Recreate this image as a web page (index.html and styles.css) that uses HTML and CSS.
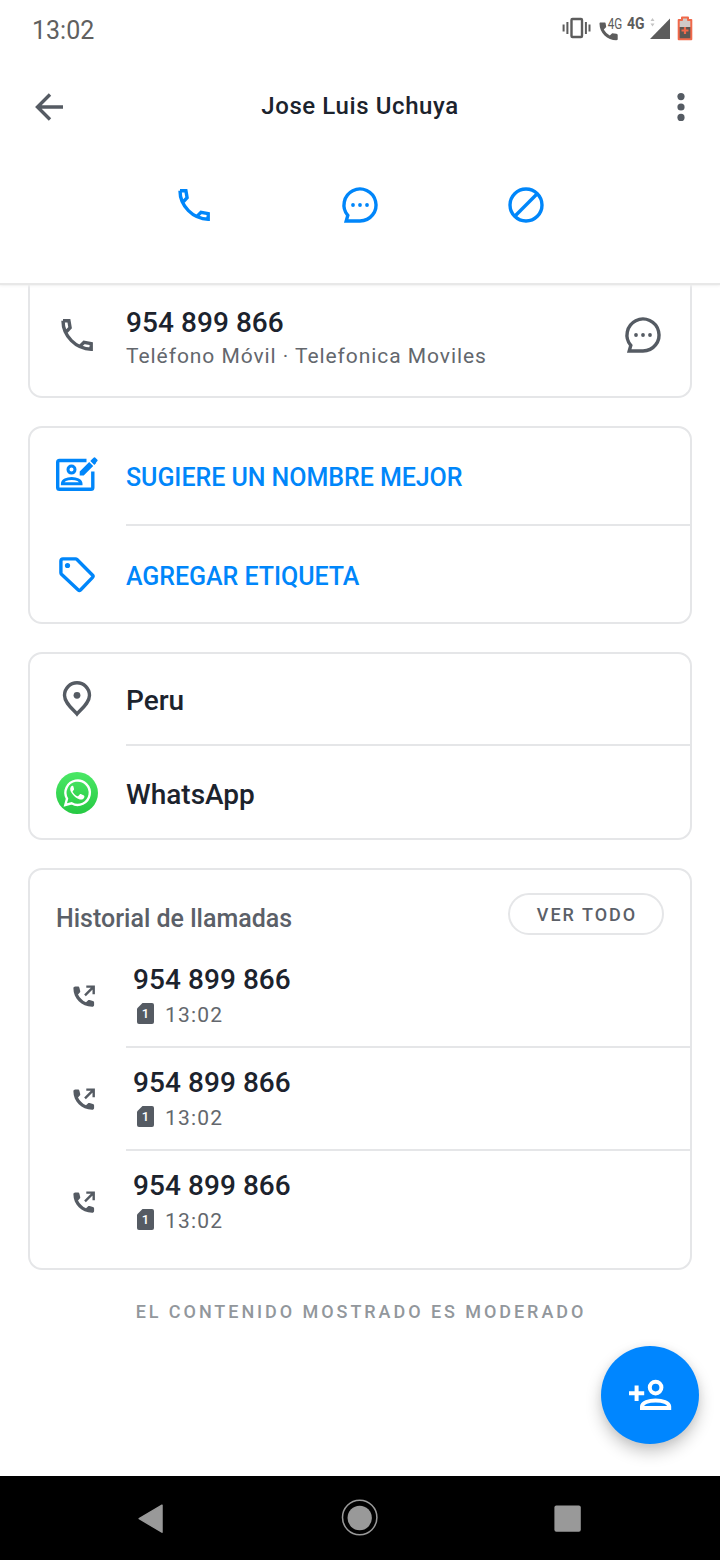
FILE: index.html
```html
<!DOCTYPE html>
<html lang="es">
<head>
<meta charset="utf-8">
<title>Jose Luis Uchuya</title>
<link rel="stylesheet" href="styles.css">
</head>
<body>
<svg class="defs" aria-hidden="true">
  <symbol id="phone" viewBox="0 0 42 42"><path class="line" d="M7 6.8h5.900l1.200 7-4.500 4.700M7 6.800C7 22 20 35 35.200 35.200V29.600L28 28.300l-4.300 4.300"/></symbol>
  <symbol id="chat" viewBox="0 0 42 42"><path class="line" d="M21 37H7.200l1.600-5.650A16 16 0 1 1 21 37z"/><circle cx="14" cy="21" r="1.900"/><circle cx="21" cy="21" r="1.900"/><circle cx="28" cy="21" r="1.900"/></symbol>
  <symbol id="outgoing" viewBox="0 0 28 28"><path d="M3.4 6.3c0-1.100.8-1.800 1.900-1.800h2.600c.8 0 1.300.5 1.500 1.300l.8 3.200c.2.7 0 1.200-.4 1.600L8 12.400c1.800 3.500 4.500 6.100 8 7.900l1.900-1.900c.5-.5 1-.6 1.700-.4l3.300.9c.8.2 1.200.8 1.200 1.500v2.500c0 1.100-.8 1.900-2 1.900C11.500 24.800 3.400 16.500 3.400 6.300z"/><path class="arrow" d="M15 13.300l8.400-8.400M16.300 4.600h7.400v7.700"/></symbol>
  <symbol id="sim" viewBox="0 0 17 21"><path d="M5.500 0H15a2 2 0 0 1 2 2v17a2 2 0 0 1-2 2H2a2 2 0 0 1-2-2V5.500z"/></symbol>
</svg>

<header class="header">
  <div class="status">
    <span class="clock">13:02</span>
    <svg class="status-icons" viewBox="560 8 136 42" width="136" height="42">
      <g fill="none" stroke="#5c5c5c"><rect x="571.500" y="19" width="10.500" height="18" rx="1" stroke-width="2.400"/><path stroke-width="2" d="M567.400 22v12M563.600 24.500v7M585.900 22v12M589.500 24.500v7"/></g>
      <path fill="#5c5c5c" d="M600.500 22.500h4c.8 0 1.100.5 1.200 1.200l.5 3.400-2.400 2.400c1.500 2.600 3.500 4.500 6 6l2.400-2.200 4.200.5c.8.100 1.300.5 1.300 1.300v4c0 .8-.5 1.200-1.300 1.200-9 0-16.900-7.500-16.900-16.500 0-.8.3-1.300 1-1.300z"/>
      <text class="net net-light" x="607.800" y="28.700" textLength="14.500" lengthAdjust="spacingAndGlyphs">4G</text>
      <text class="net net-bold" x="627" y="28.700" textLength="17.500" lengthAdjust="spacingAndGlyphs">4G</text>
      <path fill="#c4c4c4" d="M650.500 21l2-3 2 3zM650.500 23.500l2 3 2-3z"/>
      <path fill="#5c5c5c" d="M670 18.500V39h-20z"/>
      <path fill="#cfcac8" d="M681 18h8v3h2v9h-12v-9h2z"/>
      <path fill="#5c5753" d="M679 27h12v12h-12z"/>
      <path fill="none" stroke="#f0694a" stroke-width="2" stroke-linejoin="round" d="M682 20v-2.500h6V20h3.300v19.200h-12.600V20z"/>
      <path stroke="#f0694a" stroke-width="2.200" d="M681.500 30.500h7M685 27v7"/>
    </svg>
  </div>
  <div class="toolbar">
    <svg class="gray" width="42" height="42" viewBox="28 86 42 42"><path class="line" d="M63 107H38M50 94.500L37.500 107 50 119.500"/></svg>
    <h1>Jose Luis Uchuya</h1>
    <svg class="gray" width="42" height="42" viewBox="0 0 42 42"><circle cx="21" cy="10.600" r="3.600"/><circle cx="21" cy="21" r="3.600"/><circle cx="21" cy="31.400" r="3.600"/></svg>
  </div>
  <div class="actions">
    <svg class="icon"><use href="#phone"/></svg>
    <svg class="icon"><use href="#chat"/></svg>
    <svg class="icon" viewBox="0 0 42 42"><circle class="line" cx="21" cy="21" r="16"/><path class="line" d="M9.800 32.200L32.200 9.800"/></svg>
  </div>
</header>

<main class="content">
  <section class="card contact">
    <svg class="icon"><use href="#phone"/></svg>
    <div class="contact-text">
      <div class="number">954 899 866</div>
      <div class="carrier">Teléfono Móvil · Telefonica Moviles</div>
    </div>
    <svg class="icon"><use href="#chat"/></svg>
  </section>

  <section class="card links">
    <div class="row">
      <svg class="icon" viewBox="0 0 42 42"><path class="line" d="M30.500 6.500H3.500a1.800 1.800 0 0 0-1.800 1.800v25.200a1.800 1.800 0 0 0 1.800 1.800h31.500a1.800 1.800 0 0 0 1.800-1.800V17.500"/><circle class="thin" cx="15.500" cy="15.600" r="3.500"/><path class="thin" d="M6.400 29.800c0-7.200 18.600-7.200 18.600 0z"/><path d="M23.700 21.600v-4L33.200 8l4 4-9.500 9.600zM34.300 6.900l1.900-1.900 4 4-1.900 1.900zM36.200 5l1.700-1.500q.6-.5 1.200 0l2.300 2.300q.5.600 0 1.200L39.900 8.700z"/></svg>
      <span class="label">SUGIERE UN NOMBRE MEJOR</span>
    </div>
    <div class="row">
      <svg class="icon" viewBox="0 0 42 42"><path class="line" d="M6.900 4.900h12.600q.9 0 1.500.6l15.600 15.700q1 1.100 0 2.200L24.500 36q-1.100 1-2.200 0L5.500 20.300q-.6-.6-.6-1.500V6.900q0-2 2-2z"/><circle cx="11.500" cy="11.500" r="2.600"/></svg>
      <span class="label">AGREGAR ETIQUETA</span>
    </div>
  </section>

  <section class="card info">
    <div class="row place">
      <svg class="icon" viewBox="0 0 42 42"><path class="line" d="M21 36C17 31.200 8.500 25.200 8.500 17.300a12.500 12.500 0 0 1 25 0C33.500 25.200 25 31.200 21 36z"/><circle cx="21" cy="17.300" r="3.400"/></svg>
      <span class="label">Peru</span>
    </div>
    <div class="row app">
      <svg class="icon" viewBox="0 0 42 42"><defs><linearGradient id="green" x2="0" y2="1"><stop stop-color="#4be866"/><stop offset="1" stop-color="#26c943"/></linearGradient></defs><circle cx="21" cy="21" r="21" fill="url(#green)"/><path fill="none" stroke="#fff" stroke-width="2.400" d="M9.300 33l1.700-6.300a12.200 12.200 0 1 1 4.600 4.600z"/><path fill="#fff" d="M17.300 14.200c-.4-.7-1.700-.6-2.400.5-1.400 2-.6 4.500 1.100 6.800 2.100 2.900 4.600 5 7.900 5.900 2.200.6 4.300-.6 4.500-2.700.1-.9-.1-1-3.600-2.600-.5-.2-.8-.1-1.100.3l-1.400 1.700c-.3.300-.6.300-1 .1-2-.9-3.500-2.300-4.600-4.200-.2-.4-.1-.7.200-1l1-1.300c.2-.3.200-.6.100-.9z"/></svg>
      <span class="label">WhatsApp</span>
    </div>
  </section>

  <section class="card history">
    <div class="history-head">
      <h2>Historial de llamadas</h2>
      <button class="all">VER TODO</button>
    </div>
    <div class="call">
      <svg class="outgoing"><use href="#outgoing"/></svg>
      <div class="call-text">
        <div class="number">954 899 866</div>
        <div class="when"><span class="sim"><svg><use href="#sim"/></svg><b>1</b></span>13:02</div>
      </div>
    </div>
    <div class="call">
      <svg class="outgoing"><use href="#outgoing"/></svg>
      <div class="call-text">
        <div class="number">954 899 866</div>
        <div class="when"><span class="sim"><svg><use href="#sim"/></svg><b>1</b></span>13:02</div>
      </div>
    </div>
    <div class="call">
      <svg class="outgoing"><use href="#outgoing"/></svg>
      <div class="call-text">
        <div class="number">954 899 866</div>
        <div class="when"><span class="sim"><svg><use href="#sim"/></svg><b>1</b></span>13:02</div>
      </div>
    </div>
  </section>
  <p class="notice">EL CONTENIDO MOSTRADO ES MODERADO</p>
</main>

<div class="fab">
  <svg width="98" height="98" viewBox="0 0 98 98"><g fill="none" stroke="#fff" stroke-width="4"><path d="M28 47.300h15.200M35.600 39.500v15.600"/><circle cx="54.600" cy="41.600" r="5.800"/><path d="M41 62v-1.400c0-8.200 27.200-8.200 27.200 0V62z"/></g></svg>
</div>

<nav class="nav">
  <svg width="720" height="84" viewBox="0 0 720 84"><g fill="#999"><path stroke="#999" stroke-width="1.500" stroke-linejoin="round" d="M139.200 42.600l22.800-13.400v27z"/><circle cx="359.700" cy="42" r="12.200"/><rect x="554.400" y="29.400" width="26.400" height="26.400" rx="2"/></g><circle cx="359.700" cy="41.500" r="17.200" fill="none" stroke="#999" stroke-width="1.500"/></svg>
</nav>
</body>
</html>
```
FILE: styles.css
```css
* { box-sizing: border-box; }
body {
  margin: 0;
  width: 720px;
  height: 1560px;
  display: flex;
  flex-direction: column;
  position: relative;
  overflow: hidden;
  background: #fff;
  color: #1c232d;
  font-family: Roboto, sans-serif;
}
svg { display: block; flex: none; }
.defs { position: absolute; width: 0; height: 0; }
.line { fill: none; stroke: currentColor; stroke-width: 3.4; }
.thin { fill: none; stroke: currentColor; stroke-width: 3; }
.arrow { fill: none; stroke: currentColor; stroke-width: 2.4; }
.icon { width: 42px; height: 42px; fill: currentColor; }
.gray { color: #555b63; fill: currentColor; }

.header {
  height: 283px;
  flex: none;
  background: #fff;
  box-shadow: 0 2px 1px #e8e8e8, 0 3px 3px #f3f3f3;
  z-index: 1;
}
.status {
  height: 58px;
  padding: 0 24px 0 32px;
  display: flex;
  justify-content: space-between;
  align-items: center;
}
.clock { font-size: 25px; line-height: 30px; margin-top: 4px; color: #606060; }
.net { fill: #5c5c5c; font-family: Roboto, sans-serif; }
.net-light { font-size: 14px; }
.net-bold { font-size: 16px; font-weight: 700; }
.toolbar {
  height: 98px;
  padding: 0 18px 0 28px;
  display: flex;
  align-items: center;
}
h1 { flex: 1; margin: 0 0 2px; padding-right: 10px; text-align: center; font-size: 24px; font-weight: 500; letter-spacing: 0.6px; line-height: 30px; }
.actions {
  height: 98px;
  display: flex;
  justify-content: center;
  align-items: center;
  gap: 124px;
  color: #0086fa;
}

.content { flex: 1; padding: 0 28px; }
.card { border: 2px solid #e5e6e8; border-radius: 14px; margin-bottom: 28px; }
.number { font-size: 28px; line-height: 34px; font-weight: 500; letter-spacing: 0.06px; }
.contact {
  height: 115px;
  padding: 0 26px;
  display: flex;
  border-top: 0;
  border-radius: 0 0 14px 14px;
  color: #555b63;
}
.contact .icon { margin-top: 31px; }
.contact-text { flex: 1; padding: 23px 0 0 28px; }
.contact .number { color: #1c232d; }
.carrier { margin-top: 1px; font-size: 21px; line-height: 30px; letter-spacing: 0.94px; color: #63676d; }

.row { display: flex; align-items: center; gap: 28px; padding-left: 26px; position: relative; }
.row:not(:last-child)::after,
.call:not(:last-child)::after {
  content: "";
  position: absolute;
  left: 96px;
  right: 0;
  bottom: 0;
  height: 2px;
  background: #e5e6e8;
}
.links { height: 198px; color: #0086fa; }
.links .row { height: 98px; padding-bottom: 4px; }
.links .row:last-child { height: 98px; padding-bottom: 0; }
.links .label { font-size: 25px; font-weight: 500; line-height: 30px; letter-spacing: -0.05px; margin-top: 5px; }
.links .row:last-child .label { margin-top: 4px; }
.info { height: 188px; }
.place { height: 92px; padding-bottom: 2px; }
.place .icon { color: #555b63; }
.app { height: 94px; }
.info .label { font-size: 28px; line-height: 34px; font-weight: 500; margin-top: 3px; }

.history { height: 402px; }
.history-head { height: 75px; padding: 23px 26px 0; display: flex; justify-content: space-between; }
h2 { margin: 11px 0 0; font-size: 25px; line-height: 30px; font-weight: 500; color: #5b6068; }
.all {
  width: 156px;
  height: 42px;
  padding: 1px 0 0 2px;
  border: 2px solid #e5e6e8;
  border-radius: 21px;
  background: #fff;
  font: 500 18px/38px Roboto, sans-serif;
  letter-spacing: 2px;
  color: #5b6068;
}
.call { height: 103px; padding-left: 40px; display: flex; position: relative; }
.outgoing { width: 28px; height: 28px; margin-top: 37px; color: #555b63; fill: currentColor; }
.call-text { padding: 18px 0 0 35px; }
.when { display: flex; align-items: center; gap: 11px; padding-left: 4px; margin-top: 2px; font-size: 21px; line-height: 32px; letter-spacing: 1.2px; color: #63676d; }
.sim { display: grid; width: 17px; height: 21px; margin-top: -4px; color: #555b63; fill: currentColor; }
.sim svg, .sim b { grid-area: 1 / 1; width: 17px; height: 21px; }
.sim b { color: #fff; font-size: 13px; line-height: 21px; text-align: center; letter-spacing: 0; font-weight: 500; }
.notice { margin: 0; padding-left: 2px; text-align: center; font-size: 18px; line-height: 28px; font-weight: 500; letter-spacing: 2.94px; color: #92979c; }

.fab {
  position: absolute;
  left: 601px;
  top: 1346px;
  width: 98px;
  height: 98px;
  border-radius: 50%;
  background: #0086ff;
  box-shadow: 0 8px 16px rgba(0, 0, 0, 0.22), 0 1px 8px rgba(0, 0, 0, 0.06);
}
.nav { height: 84px; flex: none; background: #000; }
```
